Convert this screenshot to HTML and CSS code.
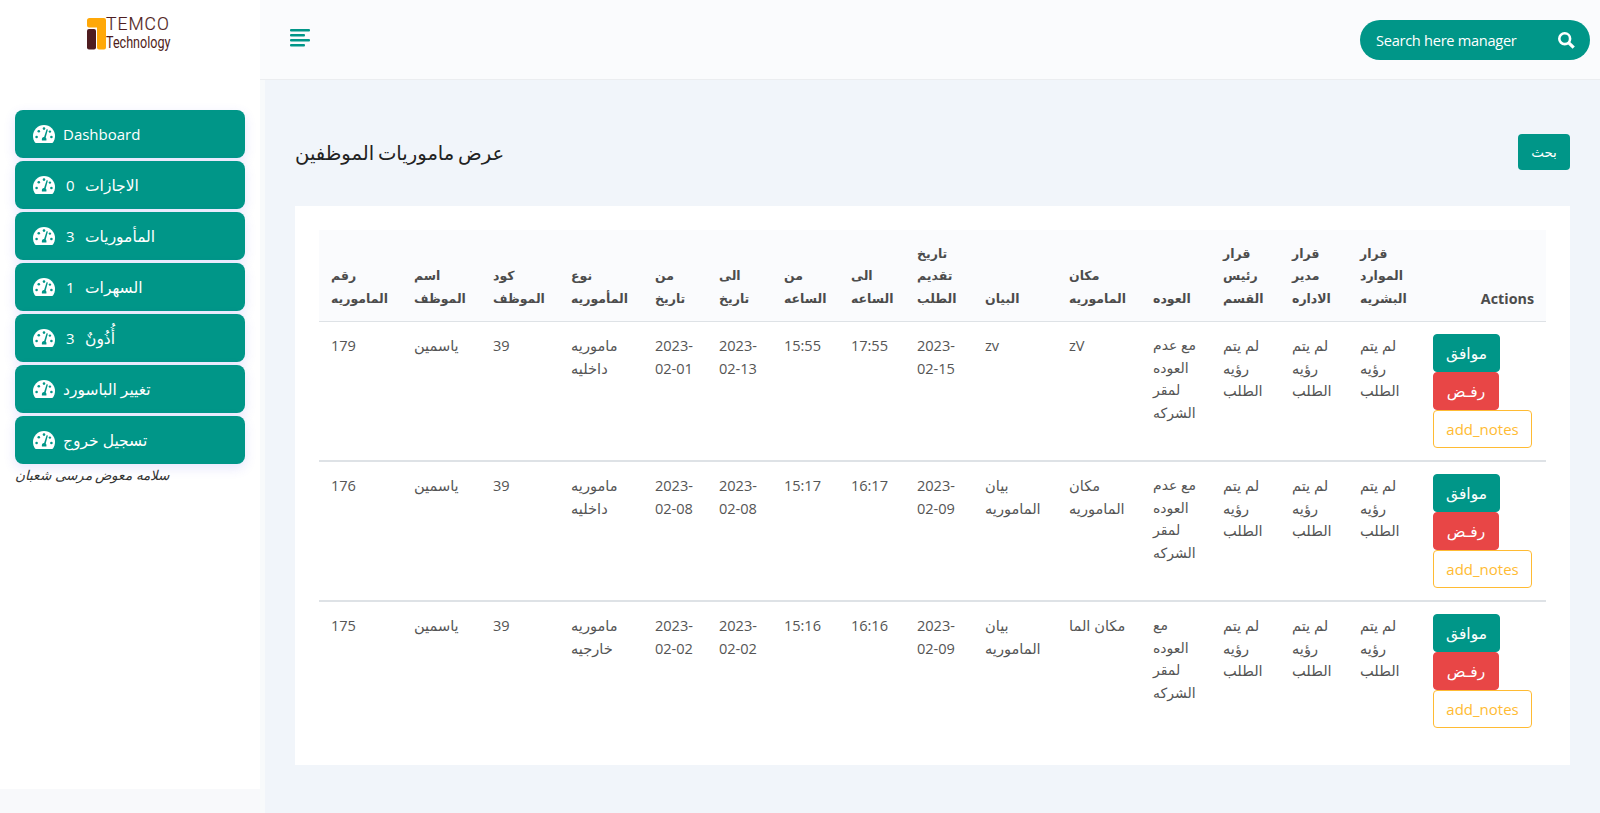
FILE: index.html
```html
<!DOCTYPE html>
<html lang="en">
<head>
<meta charset="utf-8">
<title>Temco Technology</title>
<link rel="stylesheet" href="styles.css">
</head>
<body>
<svg width="0" height="0" class="defs">
  <symbol id="gauge" viewBox="0 0 22 18">
    <path fill="#fff" d="M2 17.600C.7 15.700 0 13.500 0 11a11 11 0 0 1 22 0c0 2.500-.7 4.700-2 6.600q-.3.400-.9.400H2.900q-.6 0-.9-.4z"/>
    <g fill="#009688"><circle cx="3.600" cy="12" r="1.300"/><circle cx="5.800" cy="6.200" r="1.300"/><circle cx="11" cy="3.600" r="1.300"/><circle cx="18.400" cy="12" r="1.300"/><circle cx="16.900" cy="6.600" r="1.200"/><path d="M13.600 4.200l1.300.4-2.200 7.900q1.200 1.200.7 2.900H8.900q-.5-3 2.200-3.400z"/></g>
  </symbol>
</svg>
<div class="app">
  <aside class="sidebar">
    <div class="logo">
      <svg class="mark" width="19" height="32" viewBox="0 0 19 32"><path fill="#ffa808" d="M2.500 0H17a2 2 0 0 1 2 2v27.500a2 2 0 0 1-2 2h-5a2 2 0 0 1-2-2V9.500H2q-2 0-2-2V2.500Q0 0 2.500 0z"/><rect y="11" width="9" height="20.500" rx="2" fill="#4f1d20"/></svg>
      <div class="brand"><span class="b1">TEMCO</span><span class="b2">Technology</span></div>
    </div>
    <nav class="menu">
      <a><svg><use href="#gauge"/></svg><span class="lat">Dashboard</span></a>
      <a><svg><use href="#gauge"/></svg><span class="n">0</span><span class="ar">الاجازات</span></a>
      <a><svg><use href="#gauge"/></svg><span class="n">3</span><span class="ar">المأموريات</span></a>
      <a><svg><use href="#gauge"/></svg><span class="n">1</span><span class="ar">السهرات</span></a>
      <a><svg><use href="#gauge"/></svg><span class="n">3</span><span class="ar">أُذُونٌ</span></a>
      <a><svg><use href="#gauge"/></svg><span class="ar">تغيير الباسورد</span></a>
      <a><svg><use href="#gauge"/></svg><span class="ar">تسجيل خروج</span></a>
    </nav>
    <em class="user">سلامه معوض مرسى شعبان</em>
  </aside>
  <div class="page">
    <header class="topbar">
      <svg class="burger" width="20" height="18" viewBox="0 0 20 18"><g fill="#009688"><rect width="20" height="2.400" rx="1"/><rect y="5" width="15" height="2.400" rx="1"/><rect y="10" width="20" height="2.400" rx="1"/><rect y="15" width="15" height="2.400" rx="1"/></g></svg>
      <div class="search"><span>Search here manager</span><svg width="17" height="17" viewBox="0 0 17 17" fill="none" stroke="#fff"><circle cx="6.700" cy="6.700" r="5.400" stroke-width="2.600"/><path d="M10.800 10.800l4.900 4.900" stroke-width="3.200"/></svg></div>
    </header>
    <main class="main">
      <div class="head"><h1>عرض ماموريات الموظفين</h1><button class="find">بحث</button></div>
      <section class="card">
        <table>
          <colgroup><col class="c1"><col class="c2"><col class="c3"><col class="c4"><col class="c5"><col class="c6"><col class="c7"><col class="c8"><col class="c9"><col class="c10"><col class="c11"><col class="c12"><col class="c13"><col class="c14"><col class="c15"><col class="c16"></colgroup>
          <thead><tr>
            <th>رقم<br>الماموريه</th><th>اسم<br>الموظف</th><th>كود<br>الموظف</th><th>نوع<br>المأموريه</th><th>من<br>تاريخ</th><th>الى<br>تاريخ</th><th>من<br>الساعه</th><th>الى<br>الساعه</th><th>تاريخ<br>تقديم<br>الطلب</th><th>البيان</th><th>مكان<br>الماموريه</th><th>العوده</th><th>قرار<br>رئيس<br>القسم</th><th>قرار<br>مدير<br>الاداره</th><th>قرار<br>الموارد<br>البشريه</th><th class="act">Actions</th>
          </tr></thead>
          <tbody>
          <tr>
            <td class="l">179</td><td>ياسمين</td><td class="l">39</td><td>ماموريه<br>داخليه</td><td class="l">2023-<br>02-01</td><td class="l">2023-<br>02-13</td><td class="l">15:55</td><td class="l">17:55</td><td class="l">2023-<br>02-15</td><td class="l">zv</td><td class="l">zV</td><td class="back">مع عدم<br>العوده<br>لمقر<br>الشركه</td><td>لم يتم<br>رؤيه<br>الطلب</td><td>لم يتم<br>رؤيه<br>الطلب</td><td>لم يتم<br>رؤيه<br>الطلب</td>
            <td><div class="btns"><button class="ok">موافق</button><button class="no">رفـض</button><button class="note">add_notes</button></div></td>
          </tr>
          <tr>
            <td class="l">176</td><td>ياسمين</td><td class="l">39</td><td>ماموريه<br>داخليه</td><td class="l">2023-<br>02-08</td><td class="l">2023-<br>02-08</td><td class="l">15:17</td><td class="l">16:17</td><td class="l">2023-<br>02-09</td><td>بيان<br>الماموريه</td><td>مكان<br>الماموريه</td><td class="back">مع عدم<br>العوده<br>لمقر<br>الشركه</td><td>لم يتم<br>رؤيه<br>الطلب</td><td>لم يتم<br>رؤيه<br>الطلب</td><td>لم يتم<br>رؤيه<br>الطلب</td>
            <td><div class="btns"><button class="ok">موافق</button><button class="no">رفـض</button><button class="note">add_notes</button></div></td>
          </tr>
          <tr>
            <td class="l">175</td><td>ياسمين</td><td class="l">39</td><td>ماموريه<br>خارجيه</td><td class="l">2023-<br>02-02</td><td class="l">2023-<br>02-02</td><td class="l">15:16</td><td class="l">16:16</td><td class="l">2023-<br>02-09</td><td>بيان<br>الماموريه</td><td>مكان الما</td><td class="back">مع<br>العوده<br>لمقر<br>الشركه</td><td>لم يتم<br>رؤيه<br>الطلب</td><td>لم يتم<br>رؤيه<br>الطلب</td><td>لم يتم<br>رؤيه<br>الطلب</td>
            <td><div class="btns"><button class="ok">موافق</button><button class="no">رفـض</button><button class="note">add_notes</button></div></td>
          </tr>
          </tbody>
        </table>
      </section>
    </main>
  </div>
</div>
</body>
</html>
```
FILE: styles.css
```css
* { box-sizing: border-box; }
body { margin: 0; background: #f8f9fb; font: 15px/22.5px "Open Sans", "DejaVu Sans", sans-serif; color: #555; overflow: hidden; }
.defs { display: block; }
button { font: inherit; margin: 0; }
.app { display: flex; height: 813px; align-items: flex-start; }
.sidebar { width: 260px; height: 789px; background: #fff; padding: 17px 15px 0; flex: none; }
.logo { display: flex; margin-left: 72px; height: 93px; }
.mark { display: block; margin-top: 1px; }
.brand { display: flex; flex-direction: column; color: #4f1d20; font-family: Roboto, sans-serif; white-space: nowrap; }
.b1 { font-size: 17.500px; line-height: 15px; letter-spacing: 1px; font-weight: 300; -webkit-text-stroke: .2px #4f1d20; }
.b2 { font-size: 17px; line-height: 21px; transform: scaleX(.74); transform-origin: 0 0; width: 85px; }
.menu { display: flex; flex-direction: column; gap: 3px; }
.menu a { height: 48px; display: flex; align-items: center; padding-left: 18px; border-radius: 8px; background: #009688; color: #fff; box-shadow: 0 4px 12px rgba(80, 80, 240, .15); white-space: nowrap; }
.menu svg { width: 22px; height: 18px; margin-right: 8px; flex: none; }
.lat { font-size: 15px; }
.n { width: 22px; padding-left: 3px; }
.ar { font-size: 15.500px; }
.user { display: block; font-size: 13.600px; line-height: 21px; color: #333; white-space: nowrap; }
.page { flex: 1; height: 813px; display: flex; flex-direction: column; }
.topbar { height: 80px; background: #fafbfd; border-bottom: 1px solid #ebedf0; display: flex; justify-content: space-between; padding: 20px 10px 0 30px; }
.burger { margin-top: 9px; }
.search { width: 230px; height: 40px; border-radius: 20px; background: #009688; color: #fff; display: flex; align-items: center; justify-content: space-between; padding: 0 15px 0 16px; font-size: 14.600px; letter-spacing: -.28px; }
.main { flex: 1; background: #f1f5fa; border-left: 5px solid #f8fafb; padding: 54px 30px 0; }
.head { display: flex; justify-content: space-between; height: 72px; }
h1 { margin: 0; font-size: 19.600px; line-height: 40px; font-weight: 400; color: #222; font-family: "DejaVu Sans", sans-serif; word-spacing: -2.500px; }
.find { width: 52px; height: 36px; border: 0; border-radius: 4px; background: #009688; color: #fff; padding: 0; font-size: 13.500px; }
.card { background: #fff; height: 559px; padding: 24px; }
table { width: 1227px; border-collapse: separate; border-spacing: 0; table-layout: fixed; }
th, td { padding: 12px 0 0 12px; text-align: left; white-space: nowrap; font-size: 14.600px; }
th { height: 92px; vertical-align: bottom; padding: 0 0 11px 12px; background: #fafbfd; border-bottom: 1px solid #dee2e6; color: #4c4c4c; font-size: 12.500px; font-weight: 700; }
td { height: 140px; vertical-align: top; border-bottom: 2px solid #dee2e6; }
tr:last-child td { border-bottom-color: #fff; }
th.act { text-align: right; padding-right: 12px; font-size: 14.300px; }
td.l { letter-spacing: -.05px; }
td.back { font-size: 14px; }
.btns { display: flex; flex-direction: column; align-items: flex-start; }
.btns button { height: 38px; border-radius: 4px; border: 1px solid; padding: 0; font-size: 15px; }
.btns .ok { width: 67px; background: #009688; border-color: #009688; color: #fff; font-size: 15.500px; }
.btns .no { width: 66px; background: #e84646; border-color: #e84646; color: #fff; font-size: 15.500px; }
.btns .note { width: 99px; background: #fff; border-color: #ffbb33; color: #ffbb33; }
.c1 { width: 83px; } .c2 { width: 79px; } .c3 { width: 78px; } .c4 { width: 84px; }
.c5 { width: 64px; } .c6 { width: 65px; } .c7 { width: 67px; } .c8 { width: 66px; }
.c9 { width: 68px; } .c10 { width: 84px; } .c11 { width: 84px; } .c12 { width: 70px; }
.c13 { width: 69px; } .c14 { width: 68px; } .c15 { width: 73px; } .c16 { width: 125px; }
```
